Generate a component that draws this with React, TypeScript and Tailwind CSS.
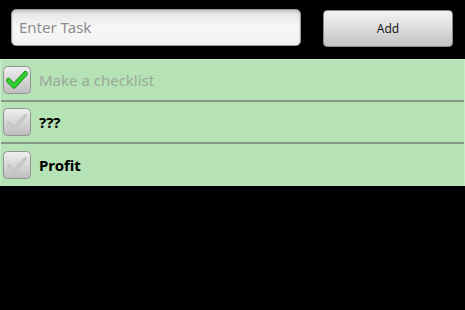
import React from "react";

function CheckBox({ checked }: { checked: boolean }) {
  return (
    <svg width="28" height="28" viewBox="0 0 28 28" className="shrink-0">
      <defs>
        <linearGradient id={checked ? "cbg1" : "cbg0"} x1="0" y1="0" x2="0" y2="1">
          <stop offset="0" stopColor="#f0f0f0" />
          <stop offset="1" stopColor="#bdbdbd" />
        </linearGradient>
      </defs>
      <rect x="0.5" y="0.5" width="27" height="27" rx="4" fill={`url(#${checked ? "cbg1" : "cbg0"})`} stroke="#939393" />
      {checked ? (
        <>
          <path d="M5.5 14.5 L11 20 L22.5 7.5" fill="none" stroke="#1e9a1e" strokeWidth="5" strokeLinecap="round" strokeLinejoin="round" />
          <path d="M5.5 14.5 L11 20 L22.5 7.5" fill="none" stroke="#2fd02f" strokeWidth="3.2" strokeLinecap="round" strokeLinejoin="round" />
        </>
      ) : (
        <path d="M5.5 14.5 L11 20 L22.5 7.5" fill="none" stroke="#c6c6c6" strokeWidth="3.5" strokeLinecap="round" strokeLinejoin="round" />
      )}
    </svg>
  );
}

const items = [
  { text: "Make a checklist", done: true },
  { text: "???", done: false },
  { text: "Profit", done: false },
];

export default function App() {
  return (
    <div className="w-[465px] h-[310px] bg-black overflow-hidden" style={{ fontFamily: '"Noto Sans", "Open Sans", sans-serif' }}>
      <div className="flex items-start h-[59px] pt-[9px] pl-[11px]">
        <div className="w-[290px] h-[37px] rounded-[5px] border border-[#9a9a9a] bg-gradient-to-b from-[#e4e4e4] via-[#f7f7f7] to-[#f2f2f2] shadow-[inset_0_2px_3px_rgba(0,0,0,0.15)] flex items-center pl-[7px]">
          <span className="text-[15px] text-[#8c8c8c] leading-none">Enter Task</span>
        </div>
        <div className="ml-[22px] mt-[1px] w-[130px] h-[37px] rounded-[4px] border border-[#8a8a8a] bg-gradient-to-b from-[#f4f4f4] to-[#c4c4c4] flex items-center justify-center">
          <span className="text-[12px] text-[#1a1a1a] leading-none">Add</span>
        </div>
      </div>
      <div className="bg-[#b5e3b5] border-l border-r border-t border-[#c8ecc8]">
        {items.map((it, i) => (
          <div
            key={i}
            className={`h-[42px] flex items-center pl-[2px] ${i < items.length - 1 ? "border-b-2 border-[#879787]" : ""}`}
          >
            <CheckBox checked={it.done} />
            <span
              className={`ml-[8px] text-[15px] leading-none ${it.done ? "text-[#9aa89a]" : "text-black font-bold"}`}
            >
              {it.text}
            </span>
          </div>
        ))}
      </div>
    </div>
  );
}
